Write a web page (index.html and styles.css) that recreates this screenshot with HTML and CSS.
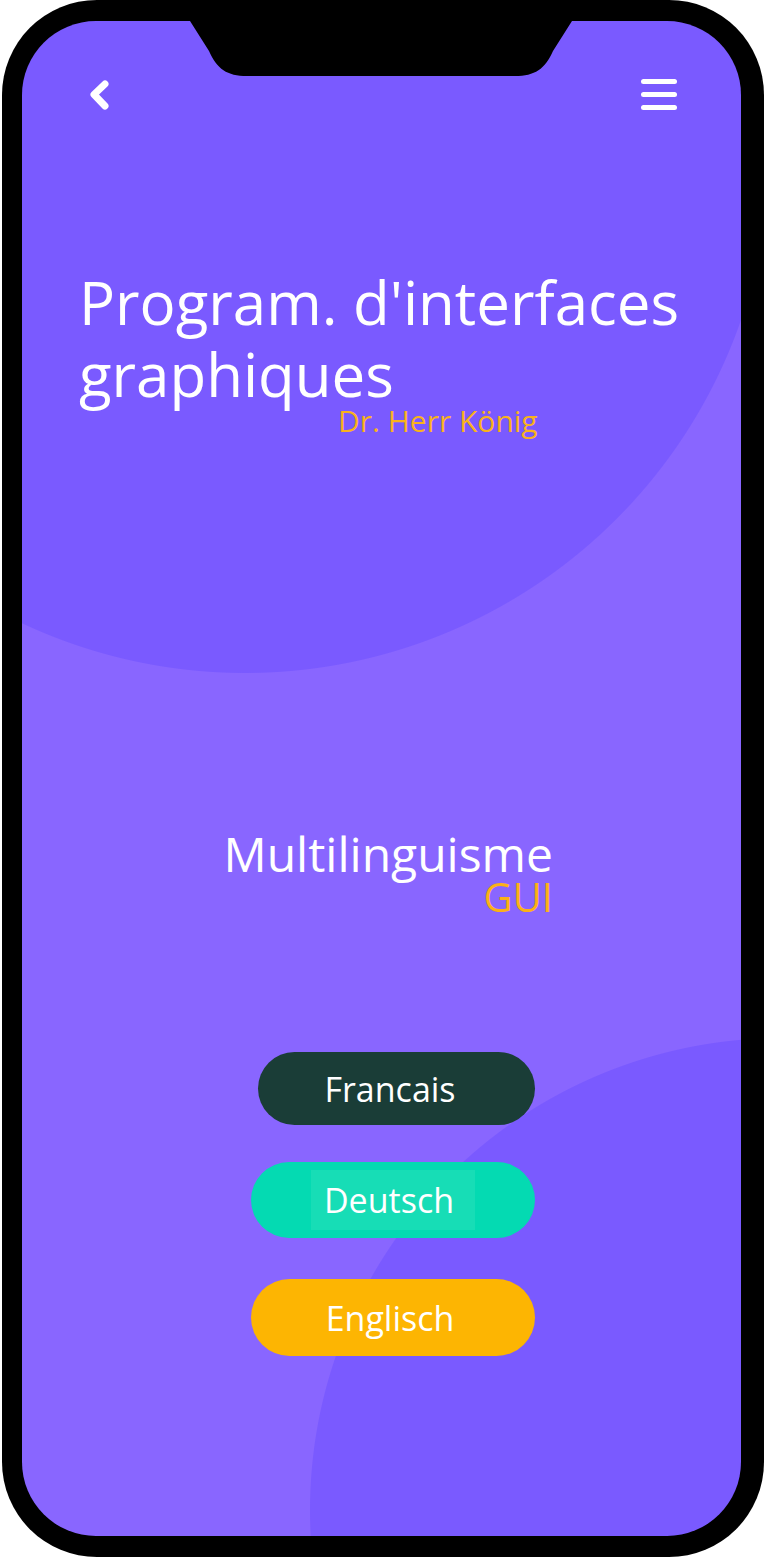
FILE: index.html
```html
<!DOCTYPE html>
<html lang="fr">
<head>
<meta charset="utf-8">
<title>Multilinguisme GUI</title>
<link rel="stylesheet" href="styles.css">
</head>
<body>
<div class="phone">
  <div class="screen">
    <svg class="notch" width="382" height="56" viewBox="0 0 382 56"><path d="M0 0 L19 30 C27 48 37 55 57 55 L325 55 C345 55 355 48 363 30 L382 0 Z" fill="#000"/></svg>
    <header class="topbar">
      <svg class="back" width="24" height="32" viewBox="0 0 24 32"><path d="M17 6 L6 16.5 L17 28" fill="none" stroke="#fff" stroke-width="7" stroke-linecap="round" stroke-linejoin="round"/></svg>
      <div class="burger"><span></span><span></span><span></span></div>
    </header>
    <section class="heading">
      <h1 class="title">Program. d'interfaces graphiques</h1>
      <p class="author">Dr. Herr König</p>
    </section>
    <section class="topic">
      <p class="topic-name">Multilinguisme</p>
      <p class="topic-tag">GUI</p>
    </section>
    <nav class="langs">
      <button class="lang lang-fr">Francais</button>
      <button class="lang lang-de"><span class="lang-focus">Deutsch</span></button>
      <button class="lang lang-en">Englisch</button>
    </nav>
  </div>
</div>
</body>
</html>
```

FILE: styles.css
```css
* { box-sizing: border-box; }
html, body { margin: 0; padding: 0; background: #fff; }
body { font-family: "Open Sans", "Noto Sans", sans-serif; }

.phone {
  margin-left: 2px;
  width: 762px;
  height: 1557px;
  background: #000;
  border-radius: 95px;
  padding: 21px 23px 21px 20px;
}

.screen {
  position: relative;
  height: 100%;
  border-radius: 74px;
  overflow: hidden;
  display: flex;
  flex-direction: column;
  background:
    radial-gradient(circle 525px at 223px 127px, #7a5aff 524.5px, rgba(122,90,255,0) 525.5px),
    radial-gradient(circle 472px at 760px 1489px, #7a5aff 471.5px, rgba(122,90,255,0) 472.5px),
    #8966ff;
}

.notch { position: absolute; top: 0; left: 168px; display: block; }

.topbar {
  margin-top: 57px;
  height: 32px;
  padding: 0 64px 0 66px;
  display: flex;
  justify-content: space-between;
  align-items: center;
}
.back { display: block; }
.burger {
  width: 36px;
  height: 32px;
  display: flex;
  flex-direction: column;
  justify-content: center;
  gap: 8px;
}
.burger span {
  display: block;
  height: 5px;
  border-radius: 3px;
  background: #fff;
}

.heading { margin-top: 156px; padding-left: 57px; }
.title {
  margin: 0;
  font-weight: 400;
  font-size: 60px;
  line-height: 72px;
  color: #fff;
  width: 640px;
}
.author {
  margin: 0 0 0 259px;
  font-size: 30px;
  line-height: 22px;
  color: #f9b21c;
}

.topic {
  margin-top: 396px;
  padding-right: 188px;
  text-align: right;
}
.topic-name {
  margin: 0;
  font-size: 48px;
  line-height: 52px;
  color: #fff;
}
.topic-tag {
  margin: 0;
  font-size: 40px;
  line-height: 34px;
  color: #fbb117;
}

.langs {
  margin-top: 138px;
  padding-right: 206px;
  display: flex;
  flex-direction: column;
  align-items: flex-end;
}
.lang {
  border: 0;
  border-radius: 40px;
  font-family: "Open Sans", "Noto Sans", sans-serif;
  font-size: 34px;
  line-height: 34px;
  color: #fff;
  display: flex;
  align-items: center;
  justify-content: center;
  padding: 0;
}
.lang-fr { width: 277px; height: 73px; background: #1a3d37; padding-right: 13px; }
.lang-de { width: 284px; height: 76px; background: #04dab2; margin-top: 37px; }
.lang-en { width: 284px; height: 77px; background: #fdb502; margin-top: 41px; padding-right: 6px; }
.lang-focus {
  display: flex;
  align-items: center;
  justify-content: center;
  width: 164px;
  height: 60px;
  padding-right: 8px;
  background: #17ddb6;
}
```
